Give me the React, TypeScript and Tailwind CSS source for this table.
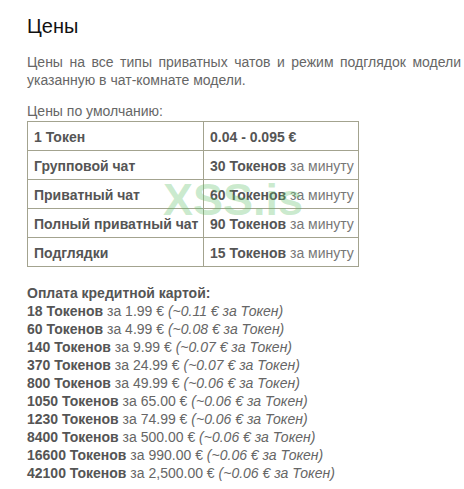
import React from 'react'

const defaults = [
    { name: '1 Токен', value: '0.04 - 0.095 €', unit: '' },
    { name: 'Групповой чат', value: '30 Токенов', unit: ' за минуту' },
    { name: 'Приватный чат', value: '60 Токенов', unit: ' за минуту' },
    { name: 'Полный приватный чат', value: '90 Токенов', unit: ' за минуту' },
    { name: 'Подглядки', value: '15 Токенов', unit: ' за минуту' },
]

const packs = [
    ['18', '1.99', '0.11'],
    ['60', '4.99', '0.08'],
    ['140', '9.99', '0.07'],
    ['370', '24.99', '0.07'],
    ['800', '49.99', '0.06'],
    ['1050', '65.00', '0.06'],
    ['1230', '74.99', '0.06'],
    ['8400', '500.00', '0.06'],
    ['16600', '990.00', '0.06'],
    ['42100', '2,500.00', '0.06'],
]

export default function App() {
    return (
        <div
            className="relative w-[464px] h-[489px] overflow-hidden bg-white pl-[27px] pr-[3px] pt-[13px] text-[14px] leading-[18px] text-[#666]"
            style={{ fontFamily: '"Liberation Sans", Arial, sans-serif' }}
        >
            <h1 className="text-[20px] leading-[26px] text-[#111] font-normal">Цены</h1>

            <p className="mt-[14px] text-justify">
                Цены на все типы приватных чатов и режим подглядок модели указанную в чат-комнате модели.
            </p>

            <p className="mt-[13px]">Цены по умолчанию:</p>

            <table className="mt-[1px] border-collapse text-[#555] font-bold">
                <tbody>
                    {defaults.map((row) => (
                        <tr key={row.name} className="h-[29px]">
                            <td className="w-[176px] border border-[#a3a38f] pl-[6px] pr-[4px] pt-[1px] align-middle">{row.name}</td>
                            <td className="w-[155px] border border-[#a3a38f] pl-[6px] pr-[4px] pt-[1px] align-middle whitespace-nowrap">
                                {row.value}
                                {row.unit && <span className="font-normal text-[#777]">{row.unit}</span>}
                            </td>
                        </tr>
                    ))}
                </tbody>
            </table>

            <div className="mt-[17px]">
                <div className="font-bold text-[#555]">Оплата кредитной картой:</div>
                {packs.map(([tokens, price, per]) => (
                    <div key={tokens} className="whitespace-nowrap">
                        <span className="font-bold text-[#555]">{tokens} Токенов</span> за {price} €{' '}
                        <i>(~{per} € за Токен)</i>
                    </div>
                ))}
            </div>

            {/* watermark */}
            <div className="pointer-events-none absolute left-[163px] top-[173px] text-[45px] leading-[54px] font-bold text-[rgba(90,190,100,0.32)]">
                XSS.is
            </div>
        </div>
    )
}
